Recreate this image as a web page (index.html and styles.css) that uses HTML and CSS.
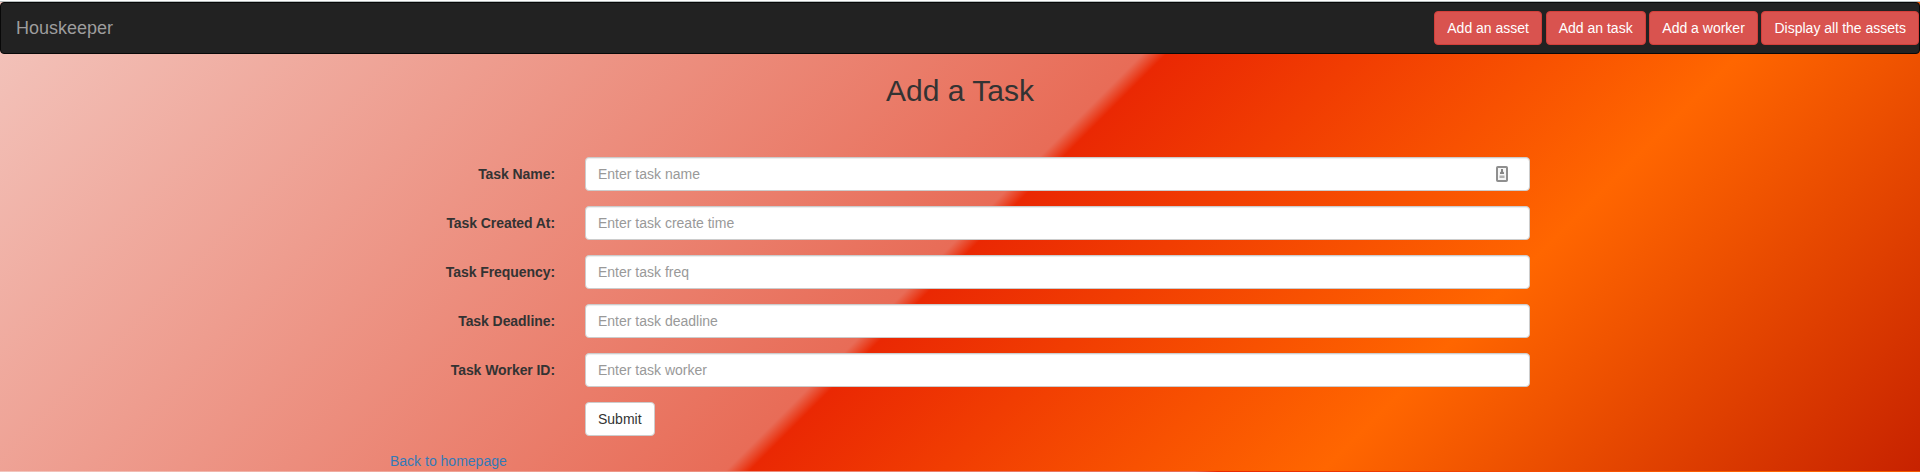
FILE: index.html
```html
<!DOCTYPE html>
<html lang="en">
<head>
<meta charset="utf-8">
<title>Houskeeper</title>
<link rel="stylesheet" href="styles.css">
</head>
<body>
<div class="top-line"></div>
<div class="page">
  <nav class="navbar">
    <a class="brand">Houskeeper</a>
    <div class="nav-actions">
      <button class="btn btn-danger">Add an asset</button>
      <button class="btn btn-danger">Add an task</button>
      <button class="btn btn-danger">Add a worker</button>
      <button class="btn btn-danger">Display all the assets</button>
    </div>
  </nav>
  <main class="container">
    <h2 class="title">Add a Task</h2>
    <form class="form">
      <div class="row"><label class="label" for="name">Task Name:</label>
        <div class="field"><input class="control" id="name" placeholder="Enter task name">
          <svg class="autofill" width="12" height="16" viewBox="0 0 12 16"><rect x="1" y="1" width="10" height="14" rx="0.8" fill="#f6f6f6" stroke="#8f8f8f" stroke-width="2"/><path d="M5 3h2v2.500l1 1V8H4V6.500l1-1z" fill="#858585"/><path d="M3.500 9.500h5v2.500h-5z" fill="#b0b0b0"/></svg>
        </div></div>
      <div class="row"><label class="label" for="created">Task Created At:</label><div class="field"><input class="control" id="created" placeholder="Enter task create time"></div></div>
      <div class="row"><label class="label" for="freq">Task Frequency:</label><div class="field"><input class="control" id="freq" placeholder="Enter task freq"></div></div>
      <div class="row"><label class="label" for="deadline">Task Deadline:</label><div class="field"><input class="control" id="deadline" placeholder="Enter task deadline"></div></div>
      <div class="row"><label class="label" for="worker">Task Worker ID:</label><div class="field"><input class="control" id="worker" placeholder="Enter task worker"></div></div>
      <div class="row row-submit"><button type="button" class="btn btn-default">Submit</button></div>
    </form>
    <a class="back">Back to homepage</a>
  </main>
</div>
</body>
</html>
```
FILE: styles.css
```css
* { box-sizing: border-box; }
html { background: #fff; }
body {
  margin: 0;
  height: 472px;
  overflow: hidden;
  font: 14px/20px "Liberation Sans", Arial, sans-serif;
  color: #333;
}
.top-line { height: 2px; background: #fff; border-bottom: 1px solid #b6bdbd; }
.page {
  height: 470px;
  background: linear-gradient(135deg, #f3c5bd 0%, #e86c57 50%, #ea2803 51%, #ff6600 75%, #c72200 100%) 0 0 / 100% 469px;
}
.navbar {
  display: flex;
  justify-content: space-between;
  height: 52px;
  padding-left: 15px;
  background: #222;
  border: 1px solid #080808;
  border-radius: 4px;
}
.brand { padding: 15px 0; font-size: 18px; color: #9d9d9d; }
.nav-actions { display: flex; gap: 3.7px; padding-top: 8px; }
.btn {
  height: 34px;
  padding: 6px 12px;
  font: inherit;
  border: 1px solid;
  border-radius: 4px;
  white-space: nowrap;
}
.btn-danger { color: #fff; background: #d9534f; border-color: #d43f3a; }
.btn-default { color: #333; background: #fff; border-color: #ccc; }
.container { width: 1170px; margin: 0 auto; padding: 20px 15px 0; }
.title { margin: 0 0 50px; font-size: 30px; line-height: 33px; font-weight: 500; text-align: center; }
.form { margin: 0 -15px; }
.row { display: flex; margin-bottom: 15px; }
.label { width: 195px; padding: 7px 15px 0; text-align: right; font-weight: 700; letter-spacing: -0.07px; }
.field { position: relative; flex: 1; padding: 0 15px; }
.control {
  display: block;
  width: 100%;
  height: 34px;
  padding: 6px 12px;
  font: inherit;
  color: #555;
  background: #fff;
  border: 1px solid #ccc;
  border-radius: 4px;
  box-shadow: inset 0 1px 1px rgba(0, 0, 0, 0.075);
}
.control::placeholder { color: #999; opacity: 1; }
.autofill { position: absolute; right: 37px; top: 9px; }
.row-submit { padding-left: 210px; }
.back { display: block; color: #337ab7; }
```
